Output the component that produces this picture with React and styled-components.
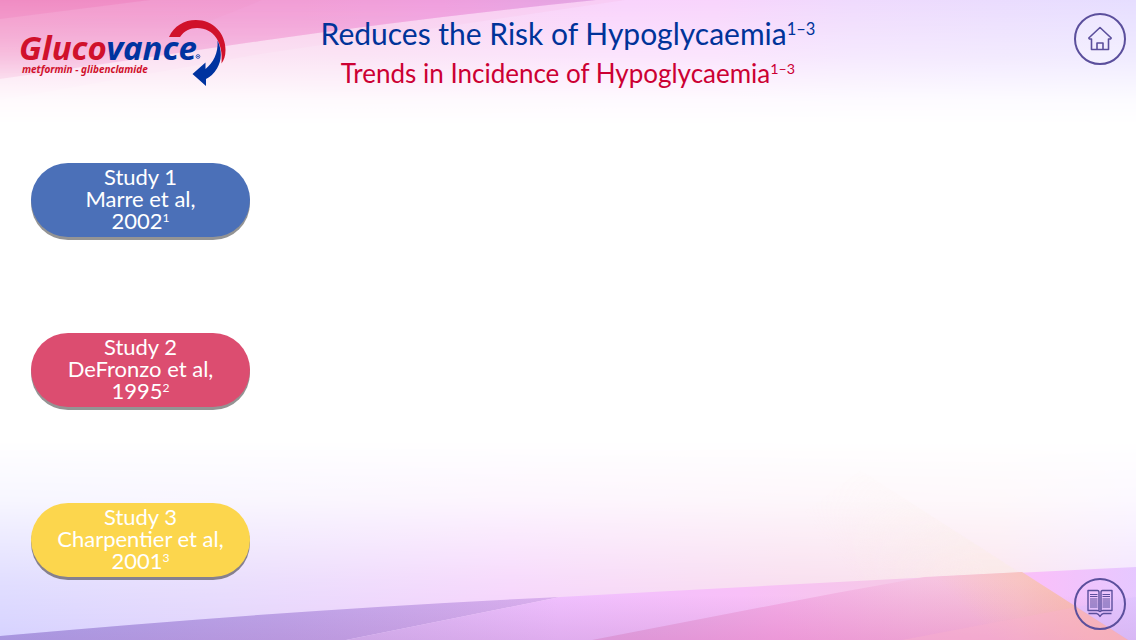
import React from "react";
import styled, { createGlobalStyle } from "styled-components";

const GlobalStyle = createGlobalStyle`
  *, *::before, *::after { box-sizing: border-box; }
  body {
    margin: 0;
    background: #ffffff;
    font-family: Lato, "Open Sans", sans-serif;
  }
`;

const Page = styled.div`
  position: relative;
  min-height: 100vh;
  display: flex;
  flex-direction: column;
`;

const Art = styled.svg`
  position: absolute;
  inset: 0;
  width: 100%;
  height: 100%;
`;

const Header = styled.header`
  position: relative;
  display: grid;
  grid-template-columns: 1fr auto 1fr;
  align-items: start;
  padding: 13px 10px 0;
`;

const Logo = styled.svg`
  display: block;
  margin: 5px 0 0 10px;
  width: 210px;
  height: 70px;
`;

const Titles = styled.div`
  text-align: center;
  white-space: nowrap;
`;

const Title = styled.h1`
  margin: 0;
  font-size: 30px;
  line-height: 40px;
  font-weight: 400;
  color: #003399;
`;

const Subtitle = styled.h2`
  margin: 0;
  font-size: 26px;
  line-height: 40px;
  font-weight: 400;
  color: #cc0033;
`;

const Sup = styled.sup`
  font-size: 55%;
  line-height: 0;
  vertical-align: baseline;
  position: relative;
  top: -0.6em;
`;

const RoundButton = styled.button`
  justify-self: end;
  flex: none;
  width: 52px;
  height: 52px;
  padding: 0;
  border: 2px solid #5b4f9c;
  border-radius: 50%;
  background: ${(p) => p.$fill || "transparent"};
  color: #5b4f9c;
  display: grid;
  place-items: center;
  cursor: pointer;
`;

const Main = styled.main`
  position: relative;
  flex: 1;
  display: flex;
  justify-content: space-between;
  padding: 70px 10px 10px 31px;
`;

const Studies = styled.nav`
  display: flex;
  flex-direction: column;
  gap: 96px;
  padding-bottom: 53px;
`;

const StudyButton = styled.button`
  width: 219px;
  height: 74px;
  padding: 0 0 2px;
  border: 0;
  border-radius: 38px;
  background: ${(p) => p.$color};
  box-shadow: 0 3px 0 ${(p) => p.$shadow || "#949494"};
  color: #ffffff;
  font: inherit;
  font-size: 22px;
  line-height: 22px;
  cursor: pointer;
`;

const Line = styled.span`
  display: block;
`;

const Corner = styled.div`
  display: flex;
  align-items: flex-end;
`;

const studies = [
  { name: "Study 1", authors: "Marre et al,", year: "2002", ref: "1", color: "#4b70b8" },
  { name: "Study 2", authors: "DeFronzo et al,", year: "1995", ref: "2", color: "#dc4d70" },
  { name: "Study 3", authors: "Charpentier et al,", year: "2001", ref: "3", color: "#fcd64d", shadow: "#85808f" },
];

function Background() {
  return (
    <Art viewBox="0 0 1136 640" preserveAspectRatio="none" aria-hidden="true">
      <defs>
        <linearGradient id="topHue">
          <stop offset="0" stopColor="#fbd6ea" />
          <stop offset="0.3" stopColor="#f8d2ee" />
          <stop offset="0.55" stopColor="#f9d3fc" />
          <stop offset="0.63" stopColor="#f8d4fc" />
          <stop offset="0.75" stopColor="#efdafd" />
          <stop offset="1" stopColor="#e6deff" />
        </linearGradient>
        <linearGradient id="bandHue" gradientUnits="userSpaceOnUse" x1="0" y1="0" x2="590" y2="0">
          <stop offset="0" stopColor="#f29aca" />
          <stop offset="0.5" stopColor="#f09ad2" />
          <stop offset="0.75" stopColor="#ee9cdd" />
          <stop offset="1" stopColor="#dfa4e4" />
        </linearGradient>
        <linearGradient id="fadeDown" x1="0" y1="0" x2="0" y2="1">
          <stop offset="0" stopColor="#fff" />
          <stop offset="0.45" stopColor="#fff" stopOpacity="0.6" />
          <stop offset="0.8" stopColor="#fff" stopOpacity="0.12" />
          <stop offset="1" stopColor="#fff" stopOpacity="0" />
        </linearGradient>
        <linearGradient id="bandFade" gradientUnits="userSpaceOnUse" x1="0" y1="0" x2="0" y2="90">
          <stop offset="0" stopColor="#fff" />
          <stop offset="0.5" stopColor="#fff" stopOpacity="0.6" />
          <stop offset="1" stopColor="#fff" stopOpacity="0.05" />
        </linearGradient>
        <mask id="topMask"><rect width="1136" height="125" fill="url(#fadeDown)" /></mask>
        <mask id="bandMask"><rect width="620" height="100" fill="url(#bandFade)" /></mask>
        <linearGradient id="lowHue">
          <stop offset="0" stopColor="#d6d2ff" />
          <stop offset="0.2" stopColor="#e2d3fc" />
          <stop offset="0.45" stopColor="#f4cdfb" />
          <stop offset="0.7" stopColor="#f7d5ea" />
          <stop offset="0.88" stopColor="#f9ddea" />
          <stop offset="1" stopColor="#efdcff" />
        </linearGradient>
        <linearGradient id="fadeUp" x1="0" y1="1" x2="0" y2="0">
          <stop offset="0" stopColor="#fff" />
          <stop offset="0.3" stopColor="#fff" stopOpacity="0.72" />
          <stop offset="0.7" stopColor="#fff" stopOpacity="0.2" />
          <stop offset="1" stopColor="#fff" stopOpacity="0" />
        </linearGradient>
        <mask id="lowMask"><rect y="440" width="1136" height="200" fill="url(#fadeUp)" /></mask>
        <linearGradient id="violet">
          <stop offset="0" stopColor="#aaa2ea" />
          <stop offset="0.5" stopColor="#bfa6ea" />
          <stop offset="1" stopColor="#dbb0ee" />
        </linearGradient>
        <linearGradient id="orchid" gradientUnits="userSpaceOnUse" x1="346" y1="0" x2="1136" y2="0">
          <stop offset="0" stopColor="#d8b8f4" />
          <stop offset="0.27" stopColor="#f0c0fe" />
          <stop offset="0.5" stopColor="#f8c0f8" />
          <stop offset="0.68" stopColor="#f6c8e8" />
          <stop offset="0.88" stopColor="#f8c0fa" />
          <stop offset="1" stopColor="#e6c8ff" />
        </linearGradient>
        <linearGradient id="rose" gradientUnits="userSpaceOnUse" x1="592" y1="0" x2="1126" y2="0">
          <stop offset="0" stopColor="#d8b0ea" />
          <stop offset="0.35" stopColor="#f4b2ea" />
          <stop offset="0.6" stopColor="#f6c2e2" />
          <stop offset="0.8" stopColor="#f8c8d8" />
          <stop offset="1" stopColor="#f8b8c0" />
        </linearGradient>
        <linearGradient id="dusk" gradientUnits="userSpaceOnUse" x1="0" y1="595" x2="0" y2="640">
          <stop offset="0" stopColor="#a060b0" stopOpacity="0" />
          <stop offset="1" stopColor="#a060b0" stopOpacity="0.2" />
        </linearGradient>
        <linearGradient id="blush" gradientUnits="userSpaceOnUse" x1="0" y1="580" x2="0" y2="640">
          <stop offset="0" stopColor="#e070bc" stopOpacity="0" />
          <stop offset="1" stopColor="#e070bc" stopOpacity="0.4" />
        </linearGradient>
        <linearGradient id="apricot" gradientUnits="userSpaceOnUse" x1="1015" y1="660" x2="1072" y2="604">
          <stop offset="0" stopColor="#f8bfa0" stopOpacity="0" />
          <stop offset="1" stopColor="#f8bfa0" stopOpacity="0.5" />
        </linearGradient>
        <linearGradient id="cream" gradientUnits="userSpaceOnUse" x1="860" y1="590" x2="950" y2="520">
          <stop offset="0" stopColor="#fbeedc" stopOpacity="0" />
          <stop offset="1" stopColor="#fbeedc" stopOpacity="0.5" />
        </linearGradient>
      </defs>

      <g mask="url(#topMask)">
        <rect width="1136" height="125" fill="url(#topHue)" />
        <path d="M0 0H625L260 54L0 100Z" fill="#f7b8e2" opacity="0.25" />
      </g>
      <g mask="url(#bandMask)">
        <path d="M0 0H596Q420 18 260 41L0 79Z" fill="url(#bandHue)" />
        <path d="M0 0H150L0 19Z" fill="#ec6cb4" opacity="0.3" />
        <path d="M262 0H596Q420 18 260 41L80 68L180 33Z" fill="#f7a8e0" opacity="0.2" />
      </g>

      <rect y="440" width="1136" height="200" fill="url(#lowHue)" mask="url(#lowMask)" />
      <g mask="url(#lowMask)">
        <path d="M860 470L1022 574L700 590Z" fill="url(#cream)" />
      </g>
      <path d="M0 636Q300 609 560 597L346 640H0Z" fill="url(#violet)" />
      <path d="M0 636Q300 609 560 597L346 640H0Z" fill="url(#dusk)" />
      <path d="M346 640L560 597Q850 581 1136 567V640Z" fill="url(#orchid)" />
      <path d="M346 640L560 597Q850 581 1136 567V640Z" fill="url(#dusk)" />
      <path d="M592 640L836 593L925 577L1022 572L1128 640Z" fill="url(#rose)" />
      <path d="M592 640L836 593L925 577L1022 572L1128 640Z" fill="url(#blush)" />
      <path d="M592 640L836 593L925 577L1022 572L1128 640Z" fill="url(#apricot)" />
      <path d="M902 640L1076 607L1128 640Z" fill="#fab2cc" opacity="0.4" />
      <path d="M1076 607L1136 597V640H1128Z" fill="#d8c0ff" opacity="0.35" />
    </Art>
  );
}

function GlucovanceLogo() {
  return (
    <Logo viewBox="20 18 210 70" role="img" aria-label="Glucovance metformin - glibenclamide">
      <g fontFamily="'Noto Sans', 'Open Sans', sans-serif" fontStyle="italic" fontWeight="700">
        <text x="19" y="60" fontSize="33" fill="#d0112b">
          Gluco<tspan fill="#0033a0">vance</tspan>
        </text>
        <text x="22" y="73" fontSize="10" fill="#d0112b">metformin - glibenclamide</text>
      </g>
      <circle cx="198" cy="56.500" r="1.900" fill="none" stroke="#0033a0" strokeWidth="0.700" />
      <circle cx="198" cy="56.500" r="0.800" fill="#0033a0" />
      <path d="M169 37C174 26 184 20 196 20C213 20 225.500 33 225.500 50C225.500 56 224 60 221.500 63.500C223.500 43 214 28 197 28C190 28 184 31 180 37Z" fill="#d0112b" />
      <path d="M217.500 40.500C222 50 222 60 217 68.500C214 73.500 210 77 206 79V86L192.500 74L205.500 62.500V69C213 63 218.500 53 217.500 40.500Z" fill="#0033a0" />
    </Logo>
  );
}

function HomeIcon() {
  return (
    <svg width="26" height="26" viewBox="0 0 26 26" fill="none" stroke="currentColor" strokeWidth="1.600" strokeLinejoin="round" aria-hidden="true">
      <path d="M13 1.500L1.800 12L2.500 13H4.500V23.500H21.500V13H23.500L24.200 12Z" />
      <path d="M10 23.500V17H16V23.500" />
    </svg>
  );
}

function BookIcon() {
  const rows = [6.5, 8.5, 11, 13, 15, 17, 19];
  return (
    <svg width="28" height="30" viewBox="0 0 28 30" fill="none" stroke="currentColor" strokeWidth="1.400" strokeLinejoin="round" aria-hidden="true">
      <path d="M14 23C13.500 22 12.500 21.500 11 21.500H2V1.500H11.500Q13 1.500 13 3.500V22" />
      <path d="M14 23C14.500 22 15.500 21.500 17 21.500H26V1.500H16.500Q15 1.500 15 3.500V22" />
      {rows.map((y) => (
        <path key={y} strokeWidth="1" d={`M4 ${y - 1}H11.500M16.500 ${y - 1}H24`} />
      ))}
      <path d="M2.500 24.500H10.500Q12.500 24.700 14 27.500Q15.500 24.700 17.500 24.500H25.500" />
    </svg>
  );
}

export default function App() {
  return (
    <Page>
      <GlobalStyle />
      <Background />
      <Header>
        <GlucovanceLogo />
        <Titles>
          <Title>Reduces the Risk of Hypoglycaemia<Sup>1–3</Sup></Title>
          <Subtitle>Trends in Incidence of Hypoglycaemia<Sup>1–3</Sup></Subtitle>
        </Titles>
        <RoundButton type="button" aria-label="Home" $fill="rgba(255, 255, 255, 0.2)">
          <HomeIcon />
        </RoundButton>
      </Header>
      <Main>
        <Studies aria-label="Studies">
          {studies.map((s) => (
            <StudyButton key={s.name} type="button" $color={s.color} $shadow={s.shadow}>
              <Line>{s.name}</Line>
              <Line>{s.authors}</Line>
              <Line>{s.year}<Sup>{s.ref}</Sup></Line>
            </StudyButton>
          ))}
        </Studies>
        <Corner>
          <RoundButton type="button" aria-label="References">
            <BookIcon />
          </RoundButton>
        </Corner>
      </Main>
    </Page>
  );
}
